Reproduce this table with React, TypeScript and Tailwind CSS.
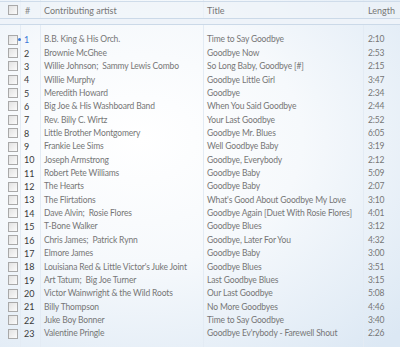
import React from 'react';

interface Track {
  artist: string;
  title: string;
  length: string;
}

const tracks: Track[] = [
  { artist: 'B.B. King & His Orch.', title: 'Time to Say Goodbye', length: '2:10' },
  { artist: 'Brownie McGhee', title: 'Goodbye Now', length: '2:53' },
  { artist: 'Willie Johnson;  Sammy Lewis Combo', title: 'So Long Baby, Goodbye [#]', length: '2:15' },
  { artist: 'Willie Murphy', title: 'Goodbye Little Girl', length: '3:47' },
  { artist: 'Meredith Howard', title: 'Goodbye', length: '2:34' },
  { artist: 'Big Joe & His Washboard Band', title: 'When You Said Goodbye', length: '2:44' },
  { artist: 'Rev. Billy C. Wirtz', title: 'Your Last Goodbye', length: '2:52' },
  { artist: 'Little Brother Montgomery', title: 'Goodbye Mr. Blues', length: '6:05' },
  { artist: 'Frankie Lee Sims', title: 'Well Goodbye Baby', length: '3:19' },
  { artist: 'Joseph Armstrong', title: 'Goodbye, Everybody', length: '2:12' },
  { artist: 'Robert Pete Williams', title: 'Goodbye Baby', length: '5:09' },
  { artist: 'The Hearts', title: 'Goodbye Baby', length: '2:07' },
  { artist: 'The Flirtations', title: "What's Good About Goodbye My Love", length: '3:10' },
  { artist: 'Dave Alvin;  Rosie Flores', title: 'Goodbye Again [Duet With Rosie Flores]', length: '4:01' },
  { artist: 'T-Bone Walker', title: 'Goodbye Blues', length: '3:12' },
  { artist: 'Chris James;  Patrick Rynn', title: 'Goodbye, Later For You', length: '4:32' },
  { artist: 'Elmore James', title: 'Goodbye Baby', length: '3:00' },
  { artist: "Louisiana Red & Little Victor's Juke Joint", title: 'Goodbye Blues', length: '3:51' },
  { artist: 'Art Tatum;  Big Joe Turner', title: 'Last Goodbye Blues', length: '3:15' },
  { artist: 'Victor Wainwright & the Wild Roots', title: 'Our Last Goodbye', length: '5:08' },
  { artist: 'Billy Thompson', title: 'No More Goodbyes', length: '4:46' },
  { artist: 'Juke Boy Bonner', title: 'Time to Say Goodbye', length: '3:40' },
  { artist: 'Valentine Pringle', title: "Goodbye Ev'rybody - Farewell Shout", length: '2:26' },
];

function Checkbox() {
  return (
    <div className="w-[10px] h-[10px] border border-[#a9a9a9] bg-gradient-to-br from-[#e2e2e2] to-[#fbfbfb]" />
  );
}

const cols = 'grid grid-cols-[20px_20px_163px_160px_37px]';

export default function App() {
  return (
    <div className="relative w-[400px] h-[347px] overflow-hidden bg-[radial-gradient(ellipse_90%_80%_at_35%_40%,#ffffff_0%,#f6f9fc_45%,#dce8f4_100%)] font-['Lato',sans-serif] leading-none text-[#767676]">
      {/* column separators */}
      <div className="absolute inset-y-0 left-[20px] w-px bg-[#e3ebf4]" />
      <div className="absolute inset-y-0 left-[40px] w-px bg-[#e3ebf4]" />
      <div className="absolute inset-y-0 left-[203px] w-px bg-[#e3ebf4]" />
      <div className="absolute inset-y-0 left-[363px] w-px bg-[#e3ebf4]" />

      <div className="relative pt-[1px]">
        <div className="h-px bg-[#cfdcea]" />
        <div className={`${cols} h-[16px] items-center bg-[#eef3f9]/60 text-[9px]`}>
          <div className="pl-[8px]">
            <Checkbox />
          </div>
          <div className="pl-[5px] text-[#8a8a8a]">#</div>
          <div className="pl-[4px] whitespace-nowrap">Contributing artist</div>
          <div className="pl-[4px]">Title</div>
          <div className="pl-[5px]">Length</div>
        </div>
        <div className="h-px bg-[#cbd9e8]" />
        <div className="h-[5px] bg-[#eef3f9]" />
        <div className="h-px bg-[#cbd9e8]" />
        <div className="h-[8px]" />

        {tracks.map((t, i) => (
          <div key={i} className={`${cols} h-[13.36px] items-center text-[8.5px] tracking-[-0.15px]`}>
            <div className="relative pl-[8px]">
              <Checkbox />
              {i === 0 && (
                <div className="absolute left-[18px] top-[3px] w-[3px] h-[3px] rounded-full bg-[#3b78d8]" />
              )}
            </div>
            <div className={`pl-[4px] text-[9px] tracking-normal ${i === 0 ? 'text-[#3b78d8]' : 'text-[#3a3a3a]'}`}>
              {i + 1}
            </div>
            <div className="pl-[4px] whitespace-pre">{t.artist}</div>
            <div className="pl-[4px] whitespace-pre">{t.title}</div>
            <div className="pl-[5px]">{t.length}</div>
          </div>
        ))}
      </div>
    </div>
  );
}
